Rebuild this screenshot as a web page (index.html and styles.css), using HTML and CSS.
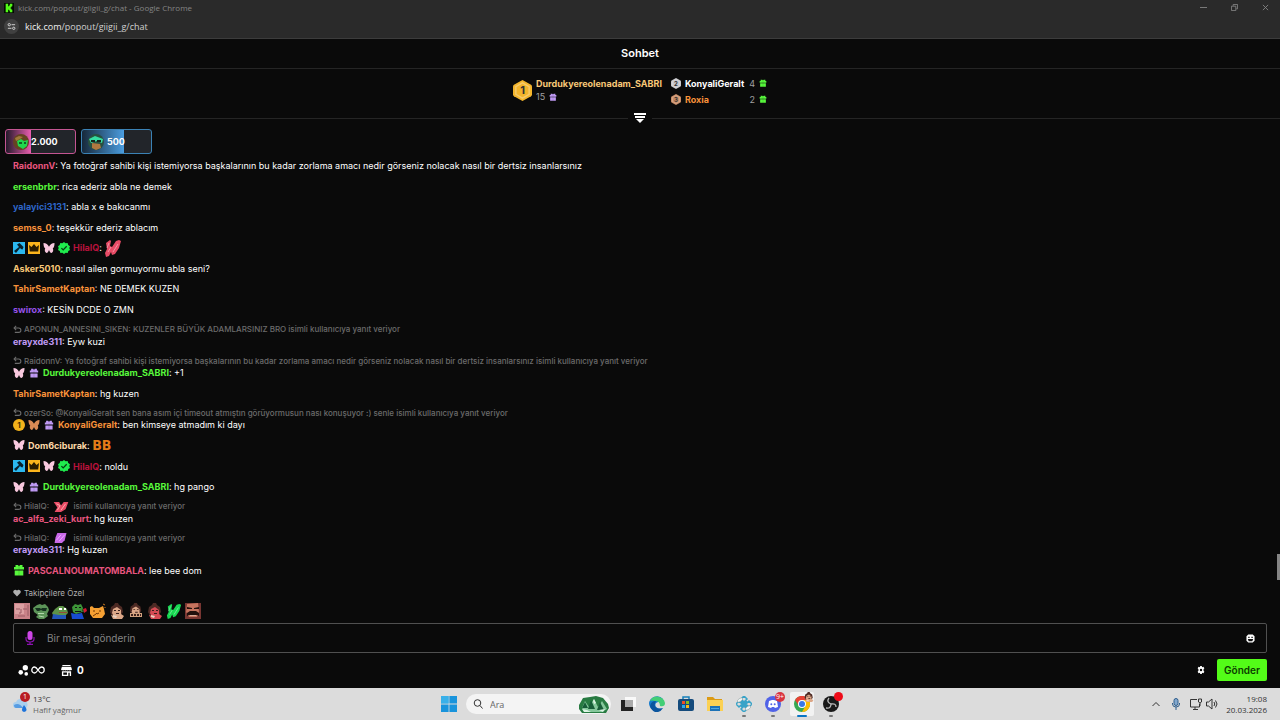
FILE: index.html
```html
<!DOCTYPE html>
<html lang="tr">
<head>
    <meta charset="UTF-8">
    <meta name="viewport" content="width=device-width, initial-scale=1.0">
    <title>kick.com/popout/giigii_g/chat</title>
    <link rel="stylesheet" href="styles.css">
</head>
<body>
    <!-- Shared icons -->
    <svg class="sprite" aria-hidden="true">
        <symbol id="mod" viewBox="0 0 12 12"><path fill="#2bb8f0" d="M0 0h12v12H0z"/><path fill="#08202c" d="M4 2.500L6.500 1l4 4L9.500 7.500l-1.500-.5-1-1L3 11 1 9l5-4z"/></symbol>
        <symbol id="crown" viewBox="0 0 12 12"><path fill="#fbb41c" d="M0 0h12v12H0z"/><path fill="#2b1c00" d="M1 3l2.500 2L6 2l2.500 3L11 3l-.8 6.500H1.800z"/></symbol>
        <symbol id="butterfly" viewBox="0 0 12 12"><path fill="currentColor" d="M.5 1c2.500 0 4.500 1.500 5.500 3.800C7 2.500 9 1 11.500 1c0 2.500-.3 4.500-1.700 5.500C10.800 8 10 10.500 8.500 11 7.300 11 6.500 9.500 6 8c-.5 1.500-1.300 3-2.500 3C2 10.500 1.200 8 2.200 6.500.8 5.500.5 3.500.5 1z"/></symbol>
        <symbol id="verified" viewBox="0 0 12 12"><path fill="#1fed4e" d="M6 0l1.600 1.200 2-.1.600 1.900L12 4.200 11.300 6l.7 1.900-1.700 1.100-.6 1.900-2-.1L6 12l-1.600-1.200-2 .1L1.800 9 0 7.900.7 6 0 4.200 1.700 3l.6-1.900 2 .1z"/><path fill="none" stroke="#053d12" stroke-width="1.300" d="M3.400 6.100l1.800 1.800 3.500-3.600"/></symbol>
        <symbol id="gift" viewBox="0 0 12 12"><path fill="currentColor" d="M2.500 1h2.500l1 1.400L7 1h2.500v2H11v2.500H1V3h1.500zM1.700 6.500h8.600v5H1.700z"/><path fill="#000" opacity=".15" d="M5.500 3h1v8.500h-1z"/></symbol>
        <symbol id="reply" viewBox="0 0 10 10"><path fill="none" stroke="currentColor" stroke-width="1.200" d="M3.500 1L1.200 3.300l2.300 2.300M1.500 3.300h4.800a2.400 2.400 0 010 4.900H2"/></symbol>
        <symbol id="hands" viewBox="0 0 18 18"><path fill="currentColor" d="M2 4l4-3 1 1-1 5 2 1 4-6 3-1 2 1-2 7-4 6-3 1-1-3-2 4-3 1-1-4 2-4z"/><path stroke="#fff" opacity=".4" fill="none" d="M4 13l3-5M9 13l5-8M5 4L3 9"/></symbol>
        <symbol id="hexagon" viewBox="0 0 20 22"><path fill="currentColor" d="M10 0l9 5q1 .6 1 2v8q0 1.400-1 2l-9 5-9-5q-1-.6-1-2V7q0-1.400 1-2z"/><path fill="none" stroke="#fff" opacity=".3" stroke-width="1.500" d="M10 3l7 4v8l-7 4-7-4V7z"/></symbol>
        <symbol id="girl" viewBox="0 0 16 16"><path fill="#4d2a24" d="M1 9l1-5 3-2 1-2h3l1 2 3 2 1 5-2 3-3-2H5l-2 3z"/><path fill="currentColor" d="M4 6l4-2 4 3v5l-3 3-4-1-2-4z"/><path fill="currentColor" d="M2 12l4 1 6-2 3 2-2 3H4z"/><path fill="#ead2c2" d="M4 12l4 1-1 2-3-1z"/><path fill="#3b201d" d="M5 7h2v1H5zM9 7h2v1H9zM7 10h3v1H7z"/></symbol>
    </svg>

    <!-- Browser window -->
    <div class="titlebar">
        <svg class="favicon" viewBox="0 0 12 12"><path fill="#030d02" d="M0 0h12v12H0z"/><path fill="#53fc18" d="M2 1h3v3h1V3h1V1h3v3H9v1H8v2h1v1h1v3H7V9H6V8H5v3H2z"/></svg>
        <span>kick.com/popout/giigii_g/chat - Google Chrome</span>
        <div class="window-buttons">
            <button aria-label="Simge durumuna küçült"><svg viewBox="0 0 8 8"><path d="M0 4h8"/></svg></button>
            <button aria-label="Geri yükle"><svg viewBox="0 0 8 8"><path d="M.5 2.500h5v5h-5zM2.500 2V.5h5v5H6"/></svg></button>
            <button aria-label="Kapat"><svg viewBox="0 0 8 8"><path d="M1 1l6 6M7 1L1 7"/></svg></button>
        </div>
    </div>
    <div class="addressbar">
        <button class="site-info" aria-label="Site bilgileri"><svg viewBox="0 0 10 10"><path d="M5 3h4M1 7h4"/><circle cx="2.500" cy="3" r="1.300"/><circle cx="7.500" cy="7" r="1.300"/></svg></button>
        <span><b>kick.com</b>/popout/giigii_g/chat</span>
    </div>

    <main class="chat">
        <h1>Sohbet</h1>

        <!-- Gift leaderboard -->
        <section class="leaderboard">
            <div class="leader first">
                <span class="rank"><svg><use href="#hexagon"/></svg><b>1</b></span>
                <div>
                    <div class="name sand">Durdukyereolenadam_SABRI</div>
                    <div class="count">15 <svg class="gift lilac"><use href="#gift"/></svg></div>
                </div>
            </div>
            <div class="runners">
                <div class="leader">
                    <span class="rank silver"><svg><use href="#hexagon"/></svg><b>2</b></span>
                    <span class="name">KonyaliGeralt</span>
                    <span class="count">4 <svg class="gift green"><use href="#gift"/></svg></span>
                </div>
                <div class="leader">
                    <span class="rank bronze"><svg><use href="#hexagon"/></svg><b>3</b></span>
                    <span class="name orange">Roxia</span>
                    <span class="count">2 <svg class="gift green"><use href="#gift"/></svg></span>
                </div>
            </div>
            <button class="expand" aria-label="Genişlet"><svg viewBox="0 0 12 10"><path fill="#fff" d="M0 0h12v2H0zM1 3h10v2H1zM2 6h8L6 10z"/></svg></button>
        </section>

        <section class="tips">
            <button class="tip pink"><svg viewBox="0 0 16 16"><circle cx="8" cy="8" r="8" fill="#654321"/><path fill="#20d84d" d="M4 7l4-2 3 2 4-1-1 6-4 3-5-3z"/><path fill="#0c6625" d="M6 8h3v2H6zM11 8h2v2h-2z"/><path fill="#a07a3a" d="M2 4l4-2 4 1-3 2-4 2z"/></svg>2.000</button>
            <button class="tip tip-blue"><svg viewBox="0 0 16 16"><circle cx="8" cy="8" r="8" fill="#285040"/><path fill="#35dca0" d="M1 5l6-3 8 3-1 4-5-2-6 2z"/><path fill="#b07840" d="M4 9l8 1 1 4-5 2-4-2z"/><path fill="#15251c" d="M3 6h4v2H3zM9 6h4v2H9z"/></svg>500</button>
        </section>

        <!-- Messages -->
        <ol class="messages">
            <li><p><b class="rose">RaidonnV</b>: Ya fotoğraf sahibi kişi istemiyorsa başkalarının bu kadar zorlama amacı nedir görseniz nolacak nasıl bir dertsiz insanlarsınız</p></li>
            <li><p><b class="green">ersenbrbr</b>: rica ederiz abla ne demek</p></li>
            <li><p><b class="blue">yalayici3131</b>: abla x e bakıcanmı</p></li>
            <li><p><b class="orange">semss_0</b>: teşekkür ederiz ablacım</p></li>
            <li><p><svg class="badge"><use href="#mod"/></svg><svg class="badge"><use href="#crown"/></svg><svg class="badge blush"><use href="#butterfly"/></svg><svg class="badge"><use href="#verified"/></svg><b class="crimson">HilalQ</b>: <svg class="emote coral"><use href="#hands"/></svg></p></li>
            <li><p><b class="sand">Asker5010</b>: nasıl ailen gormuyormu abla seni?</p></li>
            <li><p><b class="orange">TahirSametKaptan</b>: NE DEMEK KUZEN</p></li>
            <li><p><b class="purple">swirox</b>: KESİN DCDE O ZMN</p></li>
            <li>
                <div class="reply"><svg><use href="#reply"/></svg>APONUN_ANNESINI_SIKEN: KUZENLER BÜYÜK ADAMLARSINIZ BRO isimli kullanıcıya yanıt veriyor</div>
                <p><b class="lilac">erayxde311</b>: Eyw kuzi</p>
            </li>
            <li>
                <div class="reply"><svg><use href="#reply"/></svg>RaidonnV: Ya fotoğraf sahibi kişi istemiyorsa başkalarının bu kadar zorlama amacı nedir görseniz nolacak nasıl bir dertsiz insanlarsınız isimli kullanıcıya yanıt veriyor</div>
                <p><svg class="badge blush"><use href="#butterfly"/></svg><svg class="badge lilac"><use href="#gift"/></svg><b class="green">Durdukyereolenadam_SABRI</b>: +1</p>
            </li>
            <li><p><b class="orange">TahirSametKaptan</b>: hg kuzen</p></li>
            <li>
                <div class="reply"><svg><use href="#reply"/></svg>ozerSo: @KonyaliGeralt sen bana asım içi timeout atmıştın görüyormusun nası konuşuyor :) senle isimli kullanıcıya yanıt veriyor</div>
                <p><span class="badge coin">1</span><svg class="badge copper"><use href="#butterfly"/></svg><svg class="badge lilac"><use href="#gift"/></svg><b class="orange">KonyaliGeralt</b>: ben kimseye atmadım ki dayı</p>
            </li>
            <li><p><svg class="badge blush"><use href="#butterfly"/></svg><b class="cream">Dom6ciburak</b>: <span class="emote bb">BB</span></p></li>
            <li><p><svg class="badge"><use href="#mod"/></svg><svg class="badge"><use href="#crown"/></svg><svg class="badge blush"><use href="#butterfly"/></svg><svg class="badge"><use href="#verified"/></svg><b class="crimson">HilalQ</b>: noldu</p></li>
            <li><p><svg class="badge blush"><use href="#butterfly"/></svg><svg class="badge lilac"><use href="#gift"/></svg><b class="green">Durdukyereolenadam_SABRI</b>: hg pango</p></li>
            <li>
                <div class="reply"><svg><use href="#reply"/></svg>HilalQ: <svg class="reply-emote coral" viewBox="0 0 16 12"><path fill="currentColor" d="M0 1h6l2 4 3-4h5l-3 8-5 3H1l3-5z"/><path fill="none" stroke="#ffb0b0" d="M3 3l4 2-3 5M8 10l5-7"/></svg> isimli kullanıcıya yanıt veriyor</div>
                <p><b class="rose">ac_alfa_zeki_kurt</b>: hg kuzen</p>
            </li>
            <li>
                <div class="reply"><svg><use href="#reply"/></svg>HilalQ: <svg class="reply-emote" viewBox="0 0 16 12"><path fill="#c968e8" d="M4 1h10l-2 8-3 3H1l1-6z"/><path fill="none" stroke="#efadff" d="M3 9l5-6M6 10l6-7"/></svg> isimli kullanıcıya yanıt veriyor</div>
                <p><b class="lilac">erayxde311</b>: Hg kuzen</p>
            </li>
            <li><p><svg class="badge green"><use href="#gift"/></svg><b class="rose">PASCALNOUMATOMBALA</b>: lee bee dom</p></li>
        </ol>
        <div class="scroll-thumb"></div>

        <!-- Message form -->
        <form class="composer">
            <div class="mode"><svg viewBox="0 0 8 8"><path fill="currentColor" d="M4 7.500L.6 4C-.8 2 2 -.6 4 1.400 6-.6 8.800 2 7.400 4z"/></svg>Takipçilere Özel</div>
            <div class="quick-emotes">
                <svg viewBox="0 0 16 16"><path fill="#c98288" d="M0 0h16v16H0z"/><path fill="#dca0a2" d="M1 1h9v10H1z"/><path stroke="#9a5d64" fill="none" d="M2 6h4M9 6h4M7 6v4H5M4 13h7M14 2v11"/></svg>
                <svg viewBox="0 0 16 16"><path fill="#5c9458" d="M0 5l4-3 3-1 2 1 3-1 3 3 1 3-2 4 1 2-4 3H6l-3-2 2-2-4-3z"/><path fill="#15321f" d="M2 5h5l1 1 1-1h5l-1 3h-3L8 7 6 8H4z"/><path stroke="#b2d8aa" d="M5 10.500h6M6 13l5 1"/></svg>
                <svg viewBox="0 0 16 16"><path fill="#5e9348" d="M0 10l3-4 4-3 4 0 4 3 1 4-2 2H1z"/><path fill="#2457b8" d="M1 11l6 1 7 0v4H0z"/><path fill="#fff" d="M7 5h3v2H7zM12 5h2v2h-2z"/><path fill="#964c38" d="M7 9h8v1H7z"/></svg>
                <svg viewBox="0 0 16 16"><path fill="#3d9438" d="M1 4l3-3 3 1 3-1 2 4-1 4-6 2-3-2z"/><path fill="#184bd0" d="M0 10l5 1 6-1 2 6H1z"/><path fill="#d3182f" d="M12 6l3-1 1 3-3 2z"/><path stroke="#347a30" d="M9 9l4-1"/><path fill="#111" d="M4 4h2v1H4zM8 4h2v1H8zM4 8h6v1H4z"/></svg>
                <svg viewBox="0 0 16 16"><path fill="#f5a033" d="M0 4l2-1 2 2h5l4-2 1 3 1 5-3 4H3l-3-4z"/><path fill="none" stroke="#723705" d="M4 7v2M10 7v2M6 10l1 1 2-1M3 13l3-2"/><path stroke="#c87820" d="M13 1l2 1M15 4v1"/></svg>
                <svg class="skin"><use href="#girl"/></svg>
                <svg class="skin" viewBox="0 0 16 16"><use href="#girl" width="16" height="14"/><path fill="#d3a27e" d="M2 10h12v4H2z"/><path stroke="#40231d" stroke-width="2" stroke-dasharray="2 1" d="M3 12h10"/></svg>
                <svg class="flush"><use href="#girl"/></svg>
                <svg class="neon"><use href="#hands"/></svg>
                <svg viewBox="0 0 16 16"><path fill="#783632" d="M0 0h16v16H0z"/><path fill="#c6745e" d="M2 1l11-1 1 9-2 5H4L1 9z"/><path fill="#22100d" d="M2 4l5 1v1H2zM9 5l5-1v2H9zM2 10l3-2h6l3 2v3l-2-1H4l-2 1z"/><path fill="#d8a997" d="M5 12h6v1H5z"/></svg>
            </div>
            <div class="message-box">
                <button type="button" aria-label="Sesli yaz"><svg class="mic" viewBox="0 0 10 14"><rect x="2.500" width="5" height="9" rx="2.500" fill="#cf47e8"/><path fill="none" stroke="#8c12b1" stroke-width="1.200" d="M1 6v2q0 3 4 3t4-3V6M5 11v2M2 13.300h6"/></svg></button>
                <input type="text" placeholder="Bir mesaj gönderin" aria-label="Mesaj">
                <button type="button" aria-label="İfade ekle"><svg class="smile" viewBox="0 0 10 10"><path fill="#fff" d="M2.500.5h5l2 2v5l-2 2h-5l-2-2v-5z"/><path fill="#111" d="M2.500 3h1.500v1.500H2.500zM6 3h1.500v1.500H6zM2 5.500h6L7 8H3z"/></svg></button>
            </div>
            <div class="actions">
                <button type="button" class="points" aria-label="Puanlar"><svg class="dots" viewBox="0 0 12 12"><circle cx="8" cy="3" r="2.900"/><circle cx="3" cy="8" r="2.500"/><circle cx="9" cy="9.700" r="2"/></svg><svg class="infinity" viewBox="0 0 14 8"><path fill="none" stroke="#fff" stroke-width="1.300" d="M7 4C5 1 4 1 3.500 1a2.700 3 0 000 6C4 7 5 7 7 4s3-3 3.500-3a2.700 3 0 010 6C10 7 9 7 7 4z"/></svg></button>
                <button type="button" class="shop"><svg viewBox="0 0 12 12"><path fill-rule="evenodd" d="M1.500 0h9v1.200h-9zM1 2h10l1 3q-1 1.500-2 .5-1 1-2 0-1 1-2 0-1 1-2 0-1 1-2 0-1 1-2-.5zM1 6.800h10V12H9.500V8.500H8V12H1zM2.500 8.200v2.300h4V8.200z"/></svg>0</button>
                <button type="button" class="settings" aria-label="Ayarlar"><svg viewBox="0 0 10 10"><path fill-rule="evenodd" d="M4 0h2l.4 1.500 1.600-.5 1.200 1.800L8.200 4v2l1 1.200L8 9l-1.600-.5L6 10H4l-.4-1.500L2 9 .8 7.200l1-1.200V4l-1-1.200L2 1l1.600.5zM5 3.500a1.500 1.500 0 100 3 1.500 1.500 0 000-3z"/></svg></button>
                <button type="submit" class="send">Gönder</button>
            </div>
        </form>
    </main>

    <!-- Taskbar -->
    <footer class="taskbar">
        <button class="weather">
            <span class="weather-icon"><svg viewBox="0 0 16 16"><path fill="#a9cfee" d="M3 12a3 3 0 010-6 5 5 0 019-1 4 4 0 011 7z"/><path fill="#579ce2" d="M1 9q5-3 9 3H3q-2 0-2-3z"/><path fill="#1d73da" d="M11 9q5 6 0 7-4-1 0-7z"/></svg><i>1</i></span>
            <span class="weather-text">13°C<small>Hafif yağmur</small></span>
        </button>
        <nav class="apps">
            <button aria-label="Başlat"><svg viewBox="0 0 16 16"><path fill="#1994dc" d="M0 0h7.600v7.600H0zM8.400 0H16v7.600H8.400zM0 8.400h7.600V16H0zM8.400 8.400H16V16H8.400z"/><path fill="#4fc3f2" opacity=".6" d="M0 0h7.600v7.600H0z"/></svg></button>
            <label class="search"><svg viewBox="0 0 10 10"><circle cx="4.500" cy="4" r="3.300"/><path d="M7 6.500l2.500 3"/></svg><input type="search" placeholder="Ara" aria-label="Ara"><svg class="forest" viewBox="0 0 30 17"><path fill="#287b42" d="M0 9l4-7 7-1 6-1 7 2 5 6 1 4-3 5H3l-3-4z"/><path fill="#85c79b" d="M3 12l3-7 4 6 5-8 4 8 4-6 5 8-5 3H6z"/><path fill="#175d38" d="M9 13l3-9 4 9zM18 14l3-8 4 8zM3 12l3-6 3 6z"/><path fill="#dcf4e4" d="M14 5l1-2 2 4-2 1zM3 13l5 1 4 2H5zM20 14l6-1-2 3z"/></svg></label>
            <button aria-label="Görev görünümü"><svg viewBox="0 0 16 16"><path fill="#f9f9f9" d="M5 1h11v10H5z"/><path fill="#222" d="M1 4h4v7h8v4H1z"/><path fill="#aaa" d="M5 4h8v7H5z"/></svg></button>
            <button aria-label="Edge"><svg viewBox="0 0 16 16"><path fill="#147bce" d="M0 8a8 8 0 0114-5L9 6q-4 1-2 5 3 3 7 1a8 8 0 01-14-4z"/><path fill="#42ce76" d="M1 5a8 8 0 0115 2q0 4-5 3 0-5-5-5Q3 4 1 5z"/><path fill="#0b559e" d="M1 10q1-5 6-5-3 5 1 7 3 1 6 0-3 5-8 4-4-2-5-6z"/></svg></button>
            <button aria-label="Microsoft Store"><svg viewBox="0 0 16 16"><path fill="none" stroke="#1680ba" stroke-width="1.500" d="M5 4V1h6v3"/><rect y="3" width="16" height="12" rx="2" fill="#154b7c"/><path fill="#f24e24" d="M4 5h3v3H4z"/><path fill="#82bd20" d="M8 5h3v3H8z"/><path fill="#29a9ea" d="M4 9h3v3H4z"/><path fill="#fcba14" d="M8 9h3v3H8z"/></svg></button>
            <button aria-label="Dosya Gezgini"><svg viewBox="0 0 16 16"><path fill="#dc9b15" d="M0 1h6l2 2h7v5H0z"/><path fill="#fbd153" d="M0 4h16v11H0z"/><path fill="#1c72b6" d="M3 10h10v5H3z"/><path fill="#52a9de" d="M4 12h8v1H4z"/></svg></button>
            <button class="open" aria-label="Yayın aracı"><svg viewBox="0 0 16 16"><path fill="none" stroke="#38a3c8" stroke-width="1.500" d="M8 0l3 3-3 3-3-3zM3 5l3 3-3 3-3-3zM13 5l3 3-3 3-3-3zM8 10l3 3-3 3-3-3zM5 5l6 6M11 5l-6 6"/><ellipse cx="4" cy="4" rx="3" ry="1.500" transform="rotate(-35 4 4)" fill="#eef4f6" stroke="#899" stroke-width=".5"/><ellipse cx="12" cy="12" rx="3" ry="1.500" transform="rotate(-35 12 12)" fill="#eef4f6" stroke="#899" stroke-width=".5"/></svg></button>
            <button class="open" aria-label="Discord"><svg viewBox="0 0 16 16"><circle cx="8" cy="8" r="8" fill="#5163e7"/><path fill="#fff" d="M4 5l3-1h2l3 1 1 6-3 1-1-1H7l-1 1-3-1z"/><circle cx="6.300" cy="8.300" r="1" fill="#5163e7"/><circle cx="9.700" cy="8.300" r="1" fill="#5163e7"/></svg><i>9+</i></button>
            <button class="open active" aria-label="Chrome"><svg viewBox="0 0 16 16"><circle cx="8" cy="8" r="8" fill="#36a852"/><path fill="#e84235" d="M1 4a8 8 0 0114 0H8L5 10z"/><path fill="#fbbc04" d="M15 4a8 8 0 01-7 12l4-7-3-5z"/><circle cx="8" cy="8" r="4" fill="#fff"/><circle cx="8" cy="8" r="3" fill="#3978e7"/></svg><svg class="profile skin"><use href="#girl"/></svg></button>
            <button class="open" aria-label="OBS"><svg viewBox="0 0 16 16"><circle cx="8" cy="8" r="8" fill="#191919"/><path fill="none" stroke="#bbb" stroke-width="1.300" d="M6 2q-3 4 2 6 5-1 5 3M8 8q0 5-5 4"/></svg><i class="recording"></i></button>
        </nav>
        <div class="tray">
            <button aria-label="Gizli simgeler"><svg viewBox="0 0 12 12"><path d="M2.500 8L6 4.500 9.500 8"/></svg></button>
            <button class="tray-mic" aria-label="Mikrofon"><svg viewBox="0 0 12 12"><rect x="4" y=".5" width="4" height="7" rx="2" fill="#82a8ce"/><path d="M2.500 5v1q0 3 3.500 3t3.500-3V5M6 9v3"/></svg></button>
            <button class="network" aria-label="Ağ"><svg viewBox="0 0 12 12"><path d="M7 1.500H.5V9h9V6M3 11.500h5M5 9v2M8.500 1h3v3l-1.500 1-1.500-1zM10 5v3"/></svg><svg viewBox="0 0 12 12"><path d="M.5 4v4h2L6 11V1L2.500 4zM8 4q1.500 2 0 4M9.500 2.500q3 3.500 0 7"/></svg></button>
            <time datetime="2026-03-20T19:08">19:08<br>20.03.2026</time>
        </div>
    </footer>
</body>
</html>
```
FILE: styles.css
```css
* {
    box-sizing: border-box;
}

body {
    margin: 0;
    height: 100vh;
    display: flex;
    flex-direction: column;
    overflow: hidden;
    background: #0a0a0a;
    color: #fff;
    font-family: Inter, "Noto Sans", sans-serif;
    font-size: 9px;
}

button {
    display: flex;
    align-items: center;
    justify-content: center;
    padding: 0;
    border: 0;
    background: none;
    color: inherit;
    font: inherit;
    cursor: pointer;
}

input {
    min-width: 0;
    border: 0;
    outline: 0;
    background: none;
    color: inherit;
    font: inherit;
}

svg {
    flex-shrink: 0;
}

.sprite {
    position: absolute;
    width: 0;
    height: 0;
}

/* Colours */
.sand { color: #f8c878; }
.orange { color: #f8923a; }
.green { color: #58f83c; }
.rose { color: #e8557f; }
.blue { color: #2e66c8; }
.crimson { color: #b8123c; }
.purple { color: #9552e8; }
.lilac { color: #c09af5; }
.cream { color: #ffd9a8; }
.blush { color: #f8c8de; }
.copper { color: #d98a55; }
.coral { color: #e84c66; }
.skin { color: #dca788; }
.flush { color: #d64b54; }
.neon { color: #18d852; }

/* Browser window */
.titlebar,
.addressbar {
    display: flex;
    align-items: center;
    background: #2a2a2a;
    font-family: "Open Sans", sans-serif;
}

.titlebar {
    height: 15px;
    padding-left: 4px;
    gap: 4px;
    color: #858585;
    font-size: 8px;
}

.favicon {
    width: 10px;
    height: 10px;
}

.window-buttons {
    display: flex;
    margin-left: auto;
    gap: 1px;
}

.window-buttons button {
    width: 30px;
}

.window-buttons svg {
    width: 7px;
    height: 7px;
    fill: none;
    stroke: #858585;
}

.addressbar {
    height: 24px;
    padding-left: 4px;
    gap: 6px;
    border-bottom: 1px solid #3c3c3c;
    color: #d0d0d0;
}

.addressbar b {
    color: #f0f0f0;
    font-weight: 400;
}

.site-info {
    width: 15px;
    height: 15px;
    border-radius: 50%;
    background: #404040;
}

.site-info svg {
    width: 9px;
    height: 9px;
    fill: none;
    stroke: #ddd;
}

/* Chat */
.chat {
    position: relative;
    flex: 1;
    display: flex;
    flex-direction: column;
    min-height: 0;
}

h1 {
    margin: 0;
    border-bottom: 1px solid #252525;
    font-size: 11px;
    font-weight: 600;
    line-height: 29px;
    text-align: center;
}

.leaderboard {
    position: relative;
    display: flex;
    justify-content: center;
    gap: 9px;
    height: 50px;
    padding-top: 6px;
    border-bottom: 1px solid #252525;
}

.leader {
    display: flex;
    align-items: center;
    gap: 4px;
    height: 16px;
}

.leader.first {
    height: 30px;
}

.leader .name {
    font-weight: 700;
    line-height: 13px;
}

.runners {
    width: 96px;
}

.count {
    display: flex;
    align-items: center;
    gap: 4px;
    margin-left: auto;
    color: #a0a0a0;
    line-height: 13px;
}

.gift {
    width: 8px;
    height: 8px;
}

.rank {
    display: grid;
    flex-shrink: 0;
    place-items: center;
    width: 10px;
    height: 11px;
    color: #c8c8cc;
}

.rank svg,
.rank b {
    grid-area: 1 / 1;
    width: 100%;
    height: 100%;
}

.rank b {
    color: #333;
    font-size: 6px;
    line-height: 11px;
    text-align: center;
}

.rank.bronze {
    color: #c88c65;
}

.first .rank {
    width: 19px;
    height: 21px;
    color: #f3b52c;
}

.first .rank b {
    font-size: 11px;
    line-height: 21px;
}

.expand {
    position: absolute;
    bottom: -6px;
    left: 50%;
    width: 24px;
    height: 12px;
    margin-left: -12px;
    background: #0a0a0a;
}

.expand svg {
    width: 12px;
    height: 10px;
}

.tips {
    display: flex;
    gap: 5px;
    padding: 10px 5px 5px;
}

.tip {
    justify-content: flex-start;
    width: 71px;
    height: 25px;
    padding-left: 7px;
    gap: 2px;
    border: 1px solid #c45592;
    border-radius: 3px;
    background: linear-gradient(90deg, #241a2a, #ea5eb0 25px, #22252a 25px);
    color: #fff;
    font-weight: 700;
}

.tip-blue {
    gap: 3px;
    padding-left: 6px;
    border-color: #3b82b5;
    background: linear-gradient(90deg, #17283a, #4b9de0 42px, #22252a 42px);
}

.tip svg {
    width: 16px;
    height: 16px;
}

.messages {
    flex: 1;
    display: flex;
    flex-direction: column;
    justify-content: space-between;
    min-height: 0;
    margin: 0;
    padding: 0 13px;
    list-style: none;
}

.messages p {
    display: flex;
    align-items: center;
    height: 13px;
    margin: 0;
    line-height: 13px;
    white-space: pre;
}

.messages b {
    font-weight: 700;
}

.badge {
    width: 12px;
    height: 12px;
    margin-right: 3px;
}

.messages .lilac.badge {
    width: 12px;
    height: 10px;
}

.coin {
    border-radius: 50%;
    background: #f2b21b;
    color: #4b3100;
    font-size: 8px;
    font-weight: 700;
    line-height: 12px;
    text-align: center;
}

.emote {
    width: 18px;
    height: 18px;
    margin: -3px 0;
}

.bb {
    color: #e47b18;
    font-family: "DejaVu Sans Condensed", "Liberation Sans", sans-serif;
    font-size: 14px;
    font-weight: 700;
    line-height: 18px;
}

.reply {
    display: flex;
    align-items: center;
    height: 11px;
    color: #6c6c6c;
    font-size: 8px;
    font-weight: 500;
    white-space: pre;
}

.reply svg {
    width: 9px;
    height: 9px;
    margin-right: 2px;
}

.reply .reply-emote {
    width: 16px;
    height: 11px;
    margin: 0 2px;
}

.scroll-thumb {
    position: absolute;
    right: 0;
    bottom: 108px;
    width: 3px;
    height: 26px;
    background: #858585;
}

/* Message form */
.composer {
    padding: 10px 13px 7px;
}

.mode {
    display: flex;
    align-items: center;
    gap: 3px;
    height: 12px;
    color: #b0b0b0;
    font-size: 8px;
}

.mode svg {
    width: 8px;
    height: 8px;
}

.quick-emotes {
    display: flex;
    gap: 3px;
    padding: 4px 1px;
}

.quick-emotes > svg {
    width: 16px;
    height: 16px;
}

.message-box {
    display: flex;
    align-items: center;
    height: 30px;
    padding: 0 11px 0 10px;
    border: 1px solid #505050;
    border-radius: 2px;
}

.message-box input {
    flex: 1;
    padding: 0 11px;
    font-size: 10px;
}

.message-box input::placeholder {
    color: #858585;
    opacity: 1;
}

.mic {
    width: 12px;
    height: 14px;
}

.smile {
    width: 9px;
    height: 9px;
}

.actions {
    display: flex;
    align-items: center;
    gap: 16px;
    padding: 6px 0 0 5px;
    font-size: 10px;
    font-weight: 700;
}

.actions svg {
    width: 11px;
    height: 11px;
    fill: #fff;
}

.points {
    gap: 2px;
}

.actions .infinity {
    width: 14px;
    height: 8px;
    fill: none;
}

.shop {
    gap: 5px;
}

.settings {
    margin-left: auto;
}

.actions .settings svg {
    width: 8px;
    height: 8px;
}

.send {
    width: 50px;
    height: 22px;
    margin-left: -4px;
    border-radius: 2px;
    background: #53fc18;
    color: #0b3b00;
    font-weight: 600;
}

/* Taskbar */
.taskbar {
    display: grid;
    grid-template-columns: 1fr auto 1fr;
    align-items: center;
    height: 32px;
    padding: 0 13px;
    background: #dcdcdc;
    color: #333;
    font-family: "Open Sans", sans-serif;
    font-size: 8px;
    line-height: 11px;
}

.taskbar svg {
    width: 16px;
    height: 16px;
}

.taskbar i {
    position: absolute;
    top: -4px;
    right: -4px;
    min-width: 10px;
    height: 10px;
    border-radius: 5px;
    background: #d93440;
    color: #fff;
    font-size: 7px;
    font-style: normal;
    line-height: 10px;
    text-align: center;
}

.weather {
    justify-self: start;
    gap: 4px;
    text-align: left;
}

.weather-icon {
    position: relative;
    height: 16px;
}

.taskbar .weather i {
    right: -1px;
    background: #b91c22;
}

.weather small {
    display: block;
    color: #666;
    font-size: 8px;
}

.apps {
    display: flex;
    align-items: center;
    gap: 5px;
}

.apps button {
    position: relative;
    width: 24px;
    height: 24px;
    border-radius: 2px;
}

.apps i {
    top: 0;
    right: 0;
}

.open::after {
    position: absolute;
    bottom: -1px;
    width: 4px;
    height: 2px;
    border-radius: 1px;
    background: #777;
    content: "";
}

.apps .active {
    background: #f2f2f2;
}

.active::after {
    width: 10px;
    background: #0875c4;
}

.apps .profile {
    position: absolute;
    top: 0;
    right: 0;
    width: 10px;
    height: 10px;
}

.taskbar .recording {
    width: 9px;
    min-width: 0;
    height: 9px;
    background: #ee0b18;
}

.search {
    display: flex;
    align-items: center;
    width: 145px;
    height: 20px;
    padding: 0 2px 0 7px;
    border-radius: 10px;
    background: #f4f4f4;
}

.search svg {
    width: 10px;
    height: 10px;
    fill: none;
    stroke: #333;
}

.search input {
    flex: 1;
    padding: 0 7px;
    font-size: 9px;
}

.search input::placeholder {
    color: #666;
    opacity: 1;
}

.search .forest {
    width: 30px;
    height: 17px;
    stroke: none;
}

.tray {
    display: flex;
    align-items: center;
    justify-self: end;
    gap: 8px;
    text-align: right;
}

.tray svg {
    width: 12px;
    height: 12px;
    fill: none;
    stroke: #333;
}

.tray .tray-mic svg {
    stroke: #315f8c;
}

.network {
    gap: 4px;
}
```
